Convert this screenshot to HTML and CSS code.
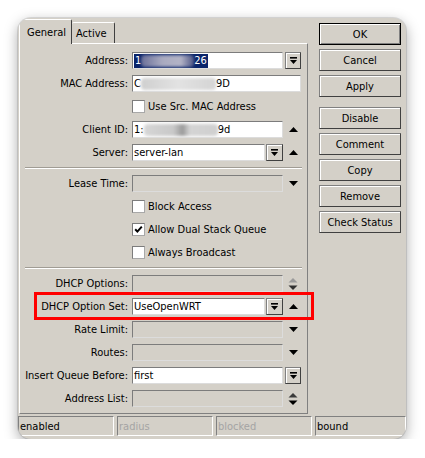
FILE: index.html
```html
<!DOCTYPE html>
<html>
<head>
<meta charset="utf-8">
<link rel="stylesheet" href="styles.css">
</head>
<body>
<div class="window">
  <div class="main">
    <div class="left">
      <div class="tabs">
        <div class="tab cur">General</div>
        <div class="tab">Active</div>
      </div>
      <div class="panel">
        <div class="row">
          <div class="lbl">Address:</div>
          <div class="field"><div class="input"><span class="selbox">1<span class="blur b-addr"></span>26</span></div></div>
          <div class="extra"><span class="ddbtn"><svg width="9" height="8" viewBox="0 0 9 8"><rect x="1" y="0" width="7" height="1.6"/><path d="M1 3h7L4.5 7z"/></svg></span></div>
        </div>
        <div class="row">
          <div class="lbl">MAC Address:</div>
          <div class="field wide"><div class="input">C<span class="blur b-mac"></span>9D</div></div>
        </div>
        <div class="row">
          <div class="lbl"></div>
          <div class="check"><span class="box"></span><span>Use Src. MAC Address</span></div>
        </div>
        <div class="row">
          <div class="lbl">Client ID:</div>
          <div class="field"><div class="input">1:<span class="blur b-cid"></span>9d</div></div>
          <div class="extra"><svg width="9" height="5" viewBox="0 0 9 5"><path d="M0 5h9L4.5 0z"/></svg></div>
        </div>
        <div class="row">
          <div class="lbl">Server:</div>
          <div class="field"><div class="input">server-lan</div><span class="ddbtn"><svg width="9" height="8" viewBox="0 0 9 8"><rect x="1" y="0" width="7" height="1.6"/><path d="M1 3h7L4.5 7z"/></svg></span></div>
          <div class="extra"><svg width="9" height="5" viewBox="0 0 9 5"><path d="M0 5h9L4.5 0z"/></svg></div>
        </div>
        <div class="sep"></div>
        <div class="row">
          <div class="lbl">Lease Time:</div>
          <div class="field"><div class="input dis"></div></div>
          <div class="extra"><svg width="9" height="5" viewBox="0 0 9 5"><path d="M0 0h9L4.5 5z"/></svg></div>
        </div>
        <div class="row">
          <div class="lbl"></div>
          <div class="check"><span class="box"></span><span>Block Access</span></div>
        </div>
        <div class="row">
          <div class="lbl"></div>
          <div class="check"><span class="box"><svg width="9" height="9" viewBox="0 0 9 9"><path d="M1.2 4.2l2.2 2.4L7.8 1.6" fill="none" stroke="#000" stroke-width="2"/></svg></span><span>Allow Dual Stack Queue</span></div>
        </div>
        <div class="row">
          <div class="lbl"></div>
          <div class="check"><span class="box"></span><span>Always Broadcast</span></div>
        </div>
        <div class="sep"></div>
        <div class="row">
          <div class="lbl">DHCP Options:</div>
          <div class="field"><div class="input dis"></div></div>
          <div class="extra"><svg width="10" height="12" viewBox="0 0 10 12"><path d="M0.5 4.5h9L5 0z" fill="#9a9a9a"/><path d="M0.5 7.5h9L5 12z" fill="#303030"/></svg></div>
        </div>
        <div class="row">
          <div class="hl"></div>
          <div class="lbl">DHCP Option Set:</div>
          <div class="field"><div class="input">UseOpenWRT</div><span class="ddbtn"><svg width="9" height="8" viewBox="0 0 9 8"><rect x="1" y="0" width="7" height="1.6"/><path d="M1 3h7L4.5 7z"/></svg></span></div>
          <div class="extra"><svg width="9" height="5" viewBox="0 0 9 5"><path d="M0 5h9L4.5 0z"/></svg></div>
        </div>
        <div class="row">
          <div class="lbl">Rate Limit:</div>
          <div class="field"><div class="input dis"></div></div>
          <div class="extra"><svg width="9" height="5" viewBox="0 0 9 5"><path d="M0 0h9L4.5 5z"/></svg></div>
        </div>
        <div class="row">
          <div class="lbl">Routes:</div>
          <div class="field"><div class="input dis"></div></div>
          <div class="extra"><svg width="9" height="5" viewBox="0 0 9 5"><path d="M0 0h9L4.5 5z"/></svg></div>
        </div>
        <div class="row">
          <div class="lbl">Insert Queue Before:</div>
          <div class="field"><div class="input">first</div></div>
          <div class="extra"><span class="ddbtn"><svg width="9" height="8" viewBox="0 0 9 8"><rect x="1" y="0" width="7" height="1.6"/><path d="M1 3h7L4.5 7z"/></svg></span></div>
        </div>
        <div class="row">
          <div class="lbl">Address List:</div>
          <div class="field"><div class="input dis"></div></div>
          <div class="extra"><svg width="10" height="12" viewBox="0 0 10 12"><path d="M0.5 4.5h9L5 0z" fill="#3a3a3a"/><path d="M0.5 7.5h9L5 12z" fill="#000"/></svg></div>
        </div>
      </div>
    </div>
    <div class="btns">
      <div class="btn def">OK</div>
      <div class="btn">Cancel</div>
      <div class="btn">Apply</div>
      <div class="btn gap">Disable</div>
      <div class="btn">Comment</div>
      <div class="btn">Copy</div>
      <div class="btn">Remove</div>
      <div class="btn">Check Status</div>
    </div>
  </div>
  <div class="status">
    <div class="seg">enabled</div>
    <div class="seg dim">radius</div>
    <div class="seg dim">blocked</div>
    <div class="seg last">bound</div>
  </div>
</div>
</body>
</html>
```

FILE: styles.css
```css
* { box-sizing: border-box; }
html, body { margin: 0; background: #fff; }
body {
  padding: 18px 0 0 18px;
  font-family: "DejaVu Sans Condensed", "DejaVu Sans", sans-serif;
  font-size: 11px;
  color: #000;
}
.window {
  width: 388px;
  height: 421px;
  background: #d4d0c8;
  border-radius: 13px;
  box-shadow: 0 0 0 1px rgba(0,0,0,0.10), 0 4px 14px rgba(0,0,0,0.35);
  overflow: hidden;
  display: flex;
  flex-direction: column;
}
.main { display: flex; height: 396px; }
.left { padding: 1px 0 0 1px; width: 290px; }
.tabs {
  display: flex;
  align-items: flex-end;
  height: 24px;
  position: relative;
  z-index: 1;
}
.tab {
  background: #d4d0c8;
  border-top: 1px solid #fff;
  border-right: 1px solid #404040;
  border-radius: 2px 2px 0 0;
  height: 21px;
  width: 43px;
  padding: 4px 0 0 4px;
  line-height: 14px;
}
.tab.cur {
  width: 53px;
  height: 25px;
  margin-bottom: -1px;
  border-left: 1px solid #fff;
  padding: 6px 0 0 7px;
}
.panel {
  width: 289px;
  height: 371px;
  border: 1px solid;
  border-color: #fff #808080 #808080 #fff;
  padding-top: 5px;
}
.row {
  display: flex;
  align-items: center;
  height: 23px;
  position: relative;
}
.lbl {
  width: 108px;
  margin-right: 4px;
  text-align: right;
  white-space: nowrap;
}
.field {
  width: 151px;
  display: flex;
  gap: 1px;
}
.field.wide { width: 169px; }
.input {
  flex: 1;
  height: 17px;
  background: #fff;
  border: 1px solid;
  border-color: #7c7c7c #dcdcdc #dcdcdc #7c7c7c;
  padding: 0 1px;
  display: flex;
  align-items: center;
  white-space: nowrap;
  overflow: hidden;
  line-height: 15px;
}
.input.dis { background: #d4d0c8; }
.selbox {
  background: #0a246a;
  color: #fff;
  display: inline-flex;
  align-items: center;
  padding: 0 1px;
  height: 14px;
}
.blur {
  display: inline-block;
  height: 12px;
  filter: blur(1.6px);
  border-radius: 4px;
}
.b-addr { width: 53px; background: linear-gradient(90deg, #6a6f98, #a9aac0 40%, #b3b3c6 75%, #4d5585); }
.b-mac { width: 75px; background: linear-gradient(90deg, #cfcfcf, #e2e2e2 50%, #d4d4d4); }
.b-cid { width: 74px; background: linear-gradient(90deg, #d6d6d6, #c8c8c8 40%, #9a9a9a 52%, #d4d4d4 62%, #cfcfcf); }
.ddbtn {
  width: 17px;
  height: 17px;
  flex: none;
  border: 1px solid;
  border-color: #808080 #404040 #404040 #808080;
  box-shadow: inset 1px 1px #fff;
  display: flex;
  align-items: center;
  justify-content: center;
  background: #d4d0c8;
}
.extra {
  width: 18px;
  padding-left: 2px;
  display: flex;
  align-items: center;
  justify-content: center;
}
.extra .ddbtn { width: 16px; }
.check {
  display: flex;
  align-items: center;
  gap: 3px;
}
.box {
  width: 13px;
  height: 13px;
  background: #fff;
  border: 1px solid;
  border-color: #7c7c7c #a8a8a8 #a8a8a8 #7c7c7c;
  display: flex;
  align-items: center;
  justify-content: center;
}
.sep {
  height: 8px;
  padding-top: 3px;
}
.sep::before {
  content: "";
  display: block;
  margin: 0 5px;
  border-top: 1px solid #a09c94;
  border-bottom: 1px solid #fff;
}
.hl {
  position: absolute;
  left: 14px;
  top: -3px;
  width: 280px;
  height: 28px;
  border: 3px solid #f00;
}
.btns {
  margin-left: 11px;
  padding-top: 5px;
  width: 82px;
  display: flex;
  flex-direction: column;
  gap: 4px;
}
.btn {
  height: 22px;
  border: 1px solid;
  border-color: #808080 #404040 #404040 #808080;
  box-shadow: inset 1px 1px #fff;
  text-align: center;
  line-height: 21px;
}
.btn.def {
  border-color: #000;
  box-shadow: inset 1px 1px #fff, inset -1px -1px #808080;
}
.btn.gap { margin-top: 6px; }
.status {
  display: flex;
  gap: 3px;
  margin-top: 2px;
  height: 20px;
}
.seg {
  width: 96px;
  border: 1px solid;
  border-color: #808080 #fff #fff #808080;
  padding-left: 1px;
  line-height: 19px;
  white-space: nowrap;
}
.seg.dim { color: #a4a4a4; }
.seg.last { flex: 1; }
```
